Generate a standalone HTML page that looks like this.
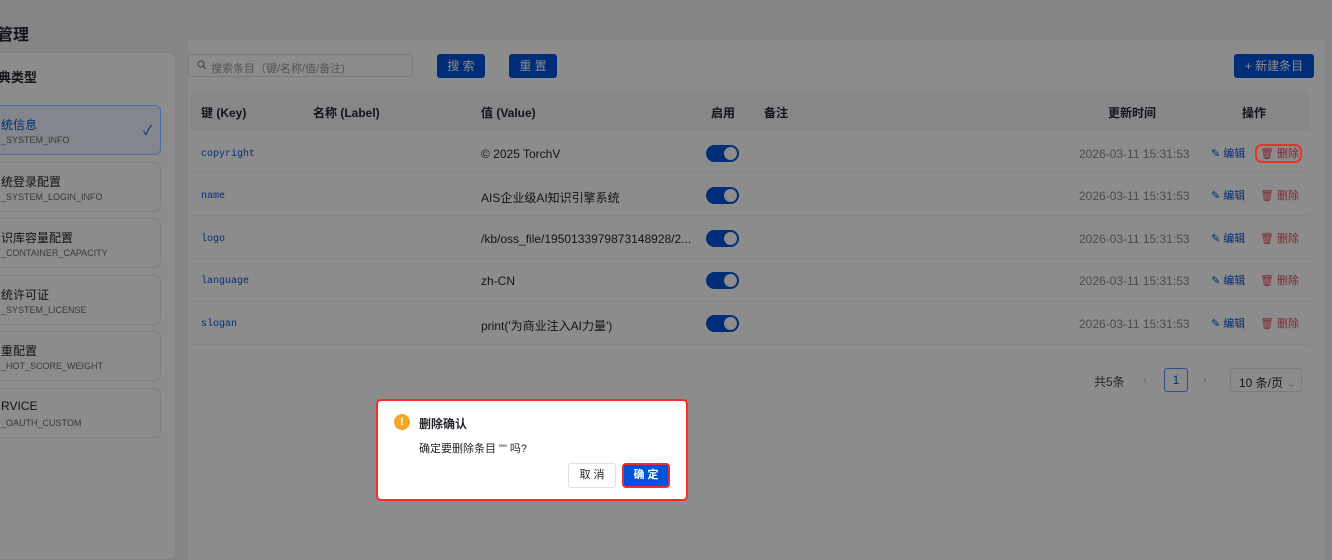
<!DOCTYPE html>
<html><head><meta charset="utf-8"><style>
*{box-sizing:border-box;margin:0;padding:0}
html,body{width:1332px;height:560px;overflow:hidden}
body{background:#858587;font-family:"Liberation Sans","Noto Sans CJK SC",sans-serif;position:relative;color:#111316}
.abs{position:absolute}
.t{font-size:12px;white-space:nowrap}
.side{left:-10px;top:52px;width:186px;height:508px;background:#8c8c8c;border:1px solid #808081;border-radius:6px}
.item{position:absolute;left:-10px;width:171px;height:50px;border:1px solid #7e7f81;border-radius:6px;background:#8c8c8c}
.item .a{position:absolute;left:10px;top:10px;font-size:12px}
.item .b{position:absolute;left:10px;top:29px;font-size:9px;color:#383838}
.main{left:188px;top:40px;width:1137px;height:520px;background:#8c8c8c}
.btn{background:#002d77;color:#8c8c8c;border-radius:3px;font-size:12px;text-align:center}
.row{position:absolute;left:190px;width:1120px;height:43px;border-bottom:1px solid #838486}
.k{font-family:"Liberation Mono",monospace;font-size:10px;color:#002d77}
.sw{position:absolute;left:706px;width:33px;height:17px;border-radius:9px;background:#002d77}
.sw:after{content:"";position:absolute;right:2px;top:2px;width:13px;height:13px;border-radius:50%;background:#8c8c8c}
.ed{color:#002d77;font-size:11px;line-height:13px}
.de{color:#7d2a31;font-size:11px;line-height:13px}
.g{color:#4b4b4b}
</style></head><body>
<div class="abs" style="left:-3px;top:21px;font-size:16px;font-weight:bold">管理</div>
<div class="abs side"></div>
<div class="abs" style="left:-2px;top:67px;font-size:13px;font-weight:bold">典类型</div>
<div class="item" style="top:105px;background:#83868c;border-color:#4a6ea8;color:#002d77"><div class="a">统信息</div><div class="b">_SYSTEM_INFO</div><div style="position:absolute;right:8px;top:14px;font-size:13px">✓</div></div>
<div class="item" style="top:162px"><div class="a">统登录配置</div><div class="b">_SYSTEM_LOGIN_INFO</div></div>
<div class="item" style="top:218px"><div class="a">识库容量配置</div><div class="b">_CONTAINER_CAPACITY</div></div>
<div class="item" style="top:275px"><div class="a">统许可证</div><div class="b">_SYSTEM_LICENSE</div></div>
<div class="item" style="top:331px"><div class="a">重配置</div><div class="b">_HOT_SCORE_WEIGHT</div></div>
<div class="item" style="top:388px"><div class="a">RVICE</div><div class="b">_OAUTH_CUSTOM</div></div>
<div class="abs main"></div>
<div class="abs" style="left:188px;top:54px;width:225px;height:23px;border:1px solid #7a7b7e;border-radius:3px;background:#8c8c8c;font-size:11px;color:#545454;padding:5px 0 0 22px;white-space:nowrap">搜索条目（键/名称/值/备注)</div>
<svg class="abs" style="left:197px;top:60px" width="10" height="10" viewBox="0 0 10 10"><circle cx="4" cy="4" r="3" fill="none" stroke="#4b4b4b" stroke-width="1.2"/><path d="M6.3 6.3L9 9" stroke="#4b4b4b" stroke-width="1.2"/></svg>
<div class="abs btn" style="left:437px;top:54px;width:48px;height:24px;line-height:24px">搜 索</div>
<div class="abs btn" style="left:509px;top:54px;width:48px;height:24px;line-height:24px">重 置</div>
<div class="abs btn" style="left:1234px;top:54px;width:80px;height:24px;line-height:24px">+ 新建条目</div>
<div class="abs" style="left:190px;top:92px;width:1120px;height:38px;background:#878789"></div>
<div class="abs t" style="left:201px;top:104px;font-weight:bold">键 (Key)</div>
<div class="abs t" style="left:313px;top:104px;font-weight:bold">名称 (Label)</div>
<div class="abs t" style="left:481px;top:104px;font-weight:bold">值 (Value)</div>
<div class="abs t" style="left:711px;top:104px;font-weight:bold">启用</div>
<div class="abs t" style="left:764px;top:104px;font-weight:bold">备注</div>
<div class="abs t" style="left:1108px;top:104px;font-weight:bold">更新时间</div>
<div class="abs t" style="left:1242px;top:104px;font-weight:bold">操作</div>
<div class="row" style="top:130px"></div><div class="row" style="top:173px"></div><div class="row" style="top:216px"></div><div class="row" style="top:259px"></div><div class="row" style="top:302px"></div>
<div class="abs k" style="left:201px;top:149px">copyright</div><div class="abs t" style="left:481px;top:147px">© 2025 TorchV</div>
<div class="abs k" style="left:201px;top:191px">name</div><div class="abs t" style="left:481px;top:189px">AIS企业级AI知识引擎系统</div>
<div class="abs k" style="left:201px;top:234px">logo</div><div class="abs t" style="left:481px;top:232px">/kb/oss_file/1950133979873148928/2...</div>
<div class="abs k" style="left:201px;top:276px">language</div><div class="abs t" style="left:481px;top:274px">zh-CN</div>
<div class="abs k" style="left:201px;top:319px">slogan</div><div class="abs t" style="left:481px;top:317px">print('为商业注入AI力量')</div>
<div class="sw" style="top:145px"></div><div class="sw" style="top:187px"></div><div class="sw" style="top:230px"></div><div class="sw" style="top:272px"></div><div class="sw" style="top:315px"></div>
<div class="abs t g" style="left:1079px;top:147px">2026-03-11 15:31:53</div>
<div class="abs t g" style="left:1079px;top:189px">2026-03-11 15:31:53</div>
<div class="abs t g" style="left:1079px;top:232px">2026-03-11 15:31:53</div>
<div class="abs t g" style="left:1079px;top:274px">2026-03-11 15:31:53</div>
<div class="abs t g" style="left:1079px;top:317px">2026-03-11 15:31:53</div>
<div class="abs t ed" style="left:1211px;top:148px">✎ 编辑</div><div class="abs t de" style="left:1260px;top:148px">🗑 删除</div>
<div class="abs t ed" style="left:1211px;top:190px">✎ 编辑</div><div class="abs t de" style="left:1260px;top:190px">🗑 删除</div>
<div class="abs t ed" style="left:1211px;top:233px">✎ 编辑</div><div class="abs t de" style="left:1260px;top:233px">🗑 删除</div>
<div class="abs t ed" style="left:1211px;top:275px">✎ 编辑</div><div class="abs t de" style="left:1260px;top:275px">🗑 删除</div>
<div class="abs t ed" style="left:1211px;top:318px">✎ 编辑</div><div class="abs t de" style="left:1260px;top:318px">🗑 删除</div>
<div class="abs" style="left:1255px;top:144px;width:47px;height:19px;border:2px solid #e8322c;border-radius:7px"></div>
<div class="abs t" style="left:1094px;top:373px;color:#252525">共5条</div>
<div class="abs t" style="left:1143px;top:373px;color:#676767">‹</div>
<div class="abs" style="left:1164px;top:368px;width:24px;height:24px;border:1px solid #2a4f8a;border-radius:3px;color:#002d77;font-size:12px;text-align:center;line-height:22px">1</div>
<div class="abs t" style="left:1203px;top:373px;color:#676767">›</div>
<div class="abs" style="left:1230px;top:368px;width:72px;height:24px;border:1px solid #7a7b7e;border-radius:3px;font-size:12px;padding:5px 0 0 8px;white-space:nowrap">10 条/页 <span style="color:#676767">⌄</span></div>
<div class="abs" style="left:376px;top:399px;width:312px;height:102px;background:#fff;border:2px solid #ff2a2a;border-radius:5px"></div>
<div class="abs" style="left:394px;top:414px;width:16px;height:16px;border-radius:50%;background:#f5a623;color:#fff;font-size:11px;font-weight:bold;text-align:center;line-height:16px">!</div>
<div class="abs" style="left:419px;top:415px;font-size:12px;font-weight:bold;color:#1f2329">删除确认</div>
<div class="abs" style="left:419px;top:440px;font-size:11px;color:#1f2329">确定要删除条目 "" 吗?</div>
<div class="abs" style="left:568px;top:463px;width:48px;height:25px;border:1px solid #dcdfe6;border-radius:3px;font-size:11px;text-align:center;line-height:23px;background:#fff;color:#1f2329">取 消</div>
<div class="abs" style="left:622px;top:463px;width:48px;height:25px;background:#0052d9;border:2px solid #e0303a;border-radius:4px;color:#fff;font-size:11px;font-weight:bold;text-align:center;line-height:21px">确 定</div>
</body></html>
